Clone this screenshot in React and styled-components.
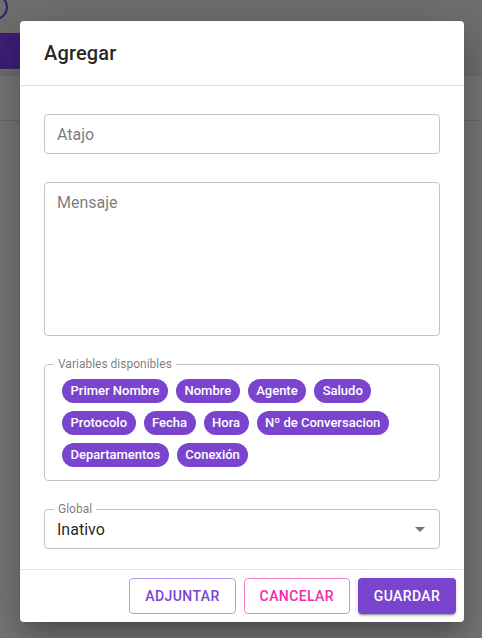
import React from "react";
import styled, { createGlobalStyle } from "styled-components";

const GlobalStyle = createGlobalStyle`
    html, body {
        margin: 0;
        padding: 0;
        font-family: Roboto, "Liberation Sans", sans-serif;
    }
    * {
        box-sizing: border-box;
    }
`;

const PURPLE = "#7a44cf";
const PINK = "#f02aa8";

const Page = styled.div`
    width: 482px;
    height: 638px;
    position: relative;
    overflow: hidden;
    background: #eeeeee;
`;

const TopArea = styled.div`
    height: 76px;
    background: #dedede;
    border-bottom: 1px solid #d2d2d2;
    position: relative;
`;

const Avatar = styled.div`
    position: absolute;
    left: -18px;
    top: -6px;
    width: 26px;
    height: 26px;
    border-radius: 50%;
    border: 2px solid #6a3ed6;
`;

const Tab = styled.div`
    position: absolute;
    left: 0;
    top: 33px;
    width: 40px;
    height: 36px;
    background: #7c3ef0;
`;

const SubBar = styled.div`
    height: 45px;
    border-bottom: 1px solid #d2d2d2;
`;

const Backdrop = styled.div`
    position: absolute;
    inset: 0;
    background: rgba(0, 0, 0, 0.5);
    display: flex;
    justify-content: center;
    align-items: flex-start;
    padding: 21px 0 0 2px;
`;

const Dialog = styled.div`
    width: 444px;
    height: 601px;
    background: #fff;
    border-radius: 4px;
    display: flex;
    flex-direction: column;
    box-shadow: 0px 11px 15px -7px rgba(0, 0, 0, 0.2), 0px 24px 38px 3px rgba(0, 0, 0, 0.14),
        0px 9px 46px 8px rgba(0, 0, 0, 0.12);
`;

const Title = styled.h2`
    margin: 0;
    padding: 16px 24px;
    font-size: 20px;
    line-height: 32px;
    font-weight: 500;
    color: rgba(0, 0, 0, 0.87);
    letter-spacing: 0.15px;
    border-bottom: 1px solid rgba(0, 0, 0, 0.12);
`;

const Content = styled.div`
    flex: 1;
    padding: 28px 24px 0;
    display: flex;
    flex-direction: column;
    gap: 28px;
`;

const Outlined = styled.div`
    position: relative;
    border: 1px solid rgba(0, 0, 0, 0.23);
    border-radius: 4px;
    height: ${(p) => p.h}px;
    padding: ${(p) => p.pad || "0 12px"};
    display: flex;
    align-items: ${(p) => (p.top ? "flex-start" : "center")};
    font-size: 16px;
    color: rgba(0, 0, 0, 0.54);
`;

const Placeholder = styled.span`
    color: rgba(0, 0, 0, 0.54);
    font-size: 16px;
`;

const Legend = styled.span`
    position: absolute;
    left: 9px;
    top: -8px;
    padding: 0 4px;
    background: #fff;
    font-size: 12px;
    line-height: 14px;
    color: rgba(0, 0, 0, 0.54);
`;

const Fieldset = styled.div`
    position: relative;
    border: 1px solid rgba(0, 0, 0, 0.23);
    border-radius: 4px;
    padding: 14px 13px 5px;
`;

const Chips = styled.div`
    display: flex;
    flex-wrap: wrap;
`;

const Chip = styled.span`
    height: 24px;
    margin: 0 4px 8px;
    padding: 0 8.5px;
    border-radius: 12px;
    background: ${PURPLE};
    color: #fff;
    font-size: 13px;
    font-weight: 500;
    line-height: 24px;
    white-space: nowrap;
`;

const SelectValue = styled.span`
    color: rgba(0, 0, 0, 0.87);
    font-size: 16px;
    flex: 1;
    padding-top: 1px;
`;

const Caret = styled.span`
    width: 0;
    height: 0;
    border-left: 5px solid transparent;
    border-right: 5px solid transparent;
    border-top: 5px solid rgba(0, 0, 0, 0.54);
    margin-right: 2px;
`;

const Footer = styled.div`
    border-top: 1px solid rgba(0, 0, 0, 0.12);
    padding: 8px;
    display: flex;
    justify-content: flex-end;
    gap: 8px;
`;

const Button = styled.button`
    height: 36px;
    padding: 0 15px;
    min-width: ${(p) => p.w}px;
    border-radius: 4px;
    font-family: Roboto, "Liberation Sans", sans-serif;
    font-size: 14px;
    font-weight: 500;
    letter-spacing: 0.4px;
    text-transform: uppercase;
    cursor: pointer;
    background: ${(p) => (p.filled ? PURPLE : "#fff")};
    color: ${(p) => (p.filled ? "#fff" : p.color)};
    border: ${(p) => (p.filled ? "none" : `1px solid ${p.border}`)};
    box-shadow: ${(p) =>
        p.filled
            ? "0px 3px 1px -2px rgba(0,0,0,0.2), 0px 2px 2px 0px rgba(0,0,0,0.14), 0px 1px 5px 0px rgba(0,0,0,0.12)"
            : "none"};
`;

const variables = [
    "Primer Nombre",
    "Nombre",
    "Agente",
    "Saludo",
    "Protocolo",
    "Fecha",
    "Hora",
    "Nº de Conversacion",
    "Departamentos",
    "Conexión",
];

export default function App() {
    return (
        <Page>
            <GlobalStyle />
            <TopArea>
                <Avatar />
                <Tab />
            </TopArea>
            <SubBar />
            <Backdrop>
                <Dialog>
                    <Title>Agregar</Title>
                    <Content>
                        <Outlined h={40}>
                            <Placeholder>Atajo</Placeholder>
                        </Outlined>
                        <Outlined h={154} top pad="10px 12px">
                            <Placeholder>Mensaje</Placeholder>
                        </Outlined>
                        <Fieldset>
                            <Legend>Variables disponibles</Legend>
                            <Chips>
                                {variables.map((v) => (
                                    <Chip key={v}>{v}</Chip>
                                ))}
                            </Chips>
                        </Fieldset>
                        <Outlined h={40}>
                            <Legend>Global</Legend>
                            <SelectValue>Inativo</SelectValue>
                            <Caret />
                        </Outlined>
                    </Content>
                    <Footer>
                        <Button w={106} color={PURPLE} border="#b89af0">
                            Adjuntar
                        </Button>
                        <Button w={106} color={PINK} border="#f77fcc">
                            Cancelar
                        </Button>
                        <Button w={98} filled>
                            Guardar
                        </Button>
                    </Footer>
                </Dialog>
            </Backdrop>
        </Page>
    );
}
